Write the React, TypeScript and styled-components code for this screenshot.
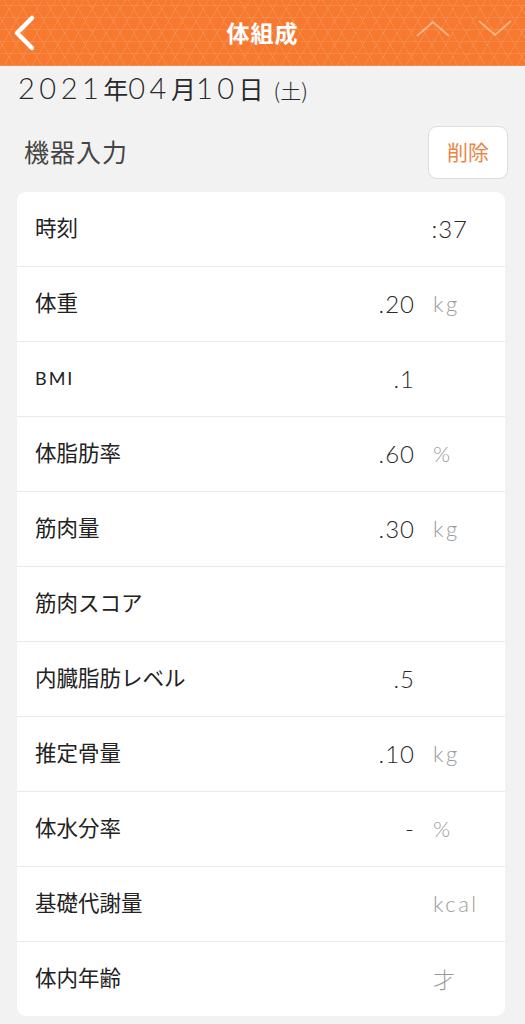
import styled, { createGlobalStyle } from "styled-components";

const GlobalStyle = createGlobalStyle`
  html, body {
    margin: 0;
    padding: 0;
    background: #f2f2f2;
  }
  body {
    font-family: "Noto Sans CJK JP", "Noto Sans", sans-serif;
  }
`;

const Page = styled.div`
  width: 525px;
  min-height: 1024px;
  background: #f2f2f2;
  overflow: hidden;
`;

const Header = styled.div`
  height: 66px;
  display: flex;
  align-items: center;
  justify-content: center;
  position: relative;
  background-color: #f6792f;
  background-image:
    repeating-linear-gradient(0deg, rgba(255, 255, 255, 0.1) 0 1px, transparent 1px 12px),
    repeating-linear-gradient(60deg, rgba(255, 255, 255, 0.1) 0 1px, transparent 1px 12px),
    repeating-linear-gradient(120deg, rgba(255, 255, 255, 0.1) 0 1px, transparent 1px 12px);
`;

const HeaderTitle = styled.div`
  color: #ffffff;
  font-size: 23px;
  font-weight: 700;
  letter-spacing: 1px;
  padding-bottom: 3px;
`;

const BackButton = styled.div`
  position: absolute;
  left: 10px;
  top: 13px;
  width: 30px;
  height: 40px;
`;

const PagerButtons = styled.div`
  position: absolute;
  right: 12px;
  top: 16px;
  display: flex;
  gap: 26px;
`;

const DateLine = styled.div`
  padding: 4px 0 0 18px;
  height: 46px;
  display: flex;
  align-items: baseline;
  color: #2a2a2a;
  font-size: 25px;
  font-weight: 400;
  box-sizing: border-box;
`;

const DateDigits = styled.span`
  font-family: "Lato", "Noto Sans CJK JP", sans-serif;
  font-size: 29px;
  font-weight: 300;
  letter-spacing: 4.5px;
`;

const Weekday = styled.span`
  font-size: 21px;
  font-weight: 300;
  margin-left: 10px;
`;

const SectionRow = styled.div`
  display: flex;
  align-items: center;
  justify-content: space-between;
  padding: 14px 17px 0 24px;
  height: 67px;
  box-sizing: border-box;
`;

const SectionTitle = styled.div`
  font-size: 25px;
  color: #454545;
  letter-spacing: 1px;
  padding-bottom: 4px;
`;

const DeleteButton = styled.div`
  width: 80px;
  height: 53px;
  box-sizing: border-box;
  display: flex;
  align-items: center;
  justify-content: center;
  background: #ffffff;
  border: 1px solid #dcdcdc;
  border-radius: 9px;
  color: #e98549;
  font-size: 21px;
  padding-bottom: 3px;
`;

const Card = styled.div`
  margin: 13px 20px 0 17px;
  background: #ffffff;
  border-radius: 9px;
  overflow: hidden;
`;

const Row = styled.div`
  height: 75px;
  display: flex;
  align-items: center;
  padding: 0 0 5px 18px;
  box-sizing: border-box;
  border-top: 1px solid #e9e9e9;
  &:first-child {
    border-top: none;
    height: 74px;
  }
`;

const Label = styled.div<{ $latin?: boolean }>`
  flex: 1;
  color: #222222;
  font-size: ${(p) => (p.$latin ? "18px" : "21.5px")};
  font-family: ${(p) =>
    p.$latin ? '"Lato", sans-serif' : '"Noto Sans CJK JP", sans-serif'};
  letter-spacing: ${(p) => (p.$latin ? "2px" : "0")};
  padding-top: ${(p) => (p.$latin ? "3px" : "0")};
`;

const Value = styled.div<{ $wide?: boolean }>`
  width: ${(p) => (p.$wide ? "160px" : "100px")};
  text-align: right;
  color: #2a2a2a;
  font-family: "Lato", sans-serif;
  font-weight: 300;
  font-size: 24px;
  letter-spacing: 1px;
  padding-top: 3px;
  margin-right: ${(p) => (p.$wide ? "37px" : "0")};
`;

const Unit = styled.div`
  width: 55px;
  margin-left: 18px;
  margin-right: 17px;
  padding-top: 3px;
  color: #9a9a9a;
  font-family: "Lato", "Noto Sans CJK JP", sans-serif;
  font-weight: 300;
  font-size: 22px;
  letter-spacing: 2.5px;
`;

type Item = {
  label: string;
  value?: string;
  unit?: string;
  latin?: boolean;
  wide?: boolean;
};

const items: Item[] = [
  { label: "時刻", value: ":37", wide: true },
  { label: "体重", value: ".20", unit: "kg" },
  { label: "BMI", value: ".1", unit: "", latin: true },
  { label: "体脂肪率", value: ".60", unit: "%" },
  { label: "筋肉量", value: ".30", unit: "kg" },
  { label: "筋肉スコア", value: "", unit: "" },
  { label: "内臓脂肪レベル", value: ".5", unit: "" },
  { label: "推定骨量", value: ".10", unit: "kg" },
  { label: "体水分率", value: "-", unit: "%" },
  { label: "基礎代謝量", value: "", unit: "kcal" },
  { label: "体内年齢", value: "", unit: "才" },
];

const App = () => {
  return (
    <Page>
      <GlobalStyle />
      <Header>
        <BackButton>
          <svg width="30" height="40" viewBox="0 0 30 40">
            <path
              d="M22 5 L7 20 L22 35"
              fill="none"
              stroke="#ffffff"
              strokeWidth="4.5"
              strokeLinecap="round"
              strokeLinejoin="round"
            />
          </svg>
        </BackButton>
        <HeaderTitle>体組成</HeaderTitle>
        <PagerButtons>
          <svg width="36" height="24" viewBox="0 0 36 24">
            <path
              d="M2 20 L18 6 L34 20"
              fill="none"
              stroke="rgba(255,255,255,0.4)"
              strokeWidth="2"
            />
          </svg>
          <svg width="36" height="24" viewBox="0 0 36 24">
            <path
              d="M2 5 L18 19 L34 5"
              fill="none"
              stroke="rgba(255,255,255,0.4)"
              strokeWidth="2"
            />
          </svg>
        </PagerButtons>
      </Header>
      <DateLine>
        <DateDigits>2021</DateDigits>年<DateDigits>04</DateDigits>月
        <DateDigits>10</DateDigits>日<Weekday>(土)</Weekday>
      </DateLine>
      <SectionRow>
        <SectionTitle>機器入力</SectionTitle>
        <DeleteButton>削除</DeleteButton>
      </SectionRow>
      <Card>
        {items.map((it) => (
          <Row key={it.label}>
            <Label $latin={it.latin}>{it.label}</Label>
            <Value $wide={it.wide}>{it.value}</Value>
            {!it.wide && <Unit>{it.unit}</Unit>}
          </Row>
        ))}
      </Card>
    </Page>
  );
};

export default App;
